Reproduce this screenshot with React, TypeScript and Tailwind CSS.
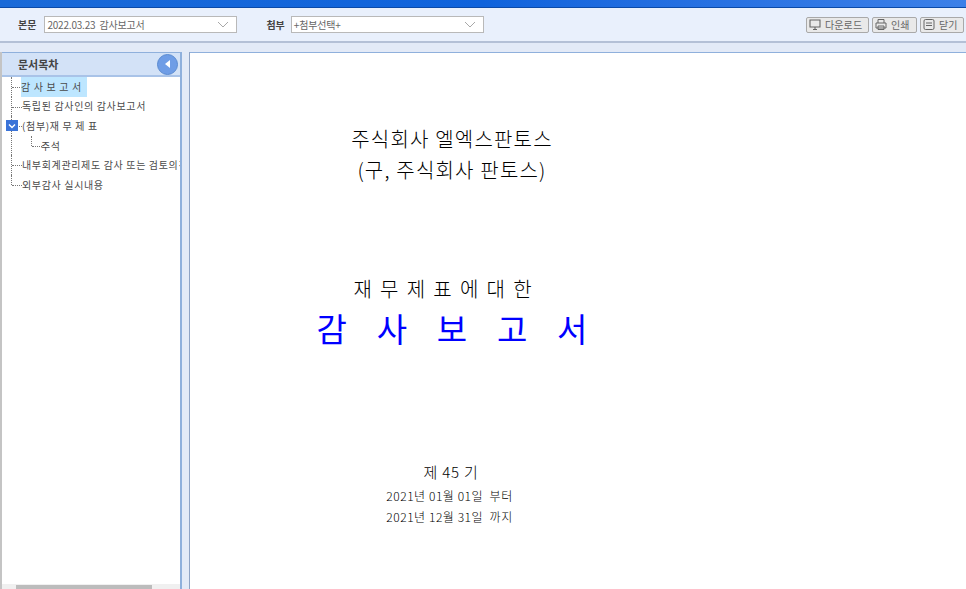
import React from "react";

const font = { fontFamily: '"Noto Sans CJK KR", "Noto Sans", sans-serif' };

function Chevron() {
  return (
    <svg width="12" height="7" viewBox="0 0 12 7" className="shrink-0">
      <path d="M1 1l5 5 5-5" fill="none" stroke="#a8a8a8" strokeWidth="1" />
    </svg>
  );
}

function Select({ text, className }: { text: string; className: string }) {
  return (
    <div className={`flex h-[17px] items-center justify-between border border-[#b9b9b9] bg-white pl-[2px] pr-[7px] text-[10px] leading-none tracking-[-0.2px] text-[#666] ${className}`}>
      <span className="whitespace-pre">{text}</span>
      <Chevron />
    </div>
  );
}

function Btn({ label, icon, className }: { label: string; icon: React.ReactNode; className: string }) {
  return (
    <div className={`flex h-4 items-center gap-[3px] rounded-[2px] border border-[#a9a9a9] bg-[#e9e9e9] pl-[1px] text-[10px] leading-none tracking-[0.1px] text-[#666] ${className}`}>
      {icon}
      <span>{label}</span>
    </div>
  );
}

function TreeRow({ label, h = false, expander = false, indent = false, last = false }: { label: string; h?: boolean; expander?: boolean; indent?: boolean; last?: boolean }) {
  return (
    <div className={`relative flex h-[19.6px] items-center overflow-hidden whitespace-nowrap text-[10px] leading-none tracking-[0.65px] text-[#4a4a4a] ${indent ? "pl-[38px]" : "pl-[19px]"}`}>
      {!indent && <span className={`absolute left-[9px] top-0 w-0 border-l border-dotted border-[#777] ${last ? "h-[10px]" : "h-full"}`} />}
      {indent && <span className="absolute left-[29px] top-0 h-[10px] w-0 border-l border-dotted border-[#777]" />}
      {indent && <span className="absolute left-[9px] top-0 h-full w-0 border-l border-dotted border-[#777]" />}
      <span className={`absolute top-[10px] w-[10px] border-t border-dotted border-[#777] ${indent ? "left-[30px]" : "left-[10px]"}`} />
      {expander && (
        <span className="absolute left-[4px] top-[4px] flex h-[11px] w-[12px] items-center justify-center bg-[#3a73d8]">
          <svg width="8" height="6" viewBox="0 0 8 6"><path d="M1 1.5l3 3 3-3" fill="none" stroke="#fff" strokeWidth="1.4" /></svg>
        </span>
      )}
      <span className={`relative flex h-5 items-center ${h ? "w-[66px] bg-[#bde6ff]" : "px-[1px]"}`}>{label}</span>
    </div>
  );
}

export default function App() {
  return (
    <div className="flex h-[589px] w-[966px] flex-col overflow-hidden bg-[#e3eaf7]" style={font}>
      <div className="h-2 shrink-0 border-b border-[#0b4aa8] bg-gradient-to-r from-[#1a6ad8] via-[#0f63dc] to-[#3c80e8]" />
      <div className="flex h-[35px] shrink-0 items-center border-b-2 border-[#b4c0d6] bg-[#e9f0fc] pl-[18px] pr-[2px]">
        <span className="mr-2 text-[10px] font-bold leading-none text-[#444]">본문</span>
        <Select text="2022.03.23  감사보고서" className="w-[193px]" />
        <span className="ml-[29px] mr-[6px] text-[10px] font-bold leading-none text-[#444]">첨부</span>
        <Select text="+첨부선택+" className="w-[193px]" />
        <div className="ml-auto flex gap-[3px]">
          <Btn
            label="다운로드"
            className="w-[63px]"
            icon={
              <svg width="14" height="13" viewBox="0 0 14 13"><path d="M2 2h10v7H2zM5 11.5h4M7 9v2.5" fill="none" stroke="#666" strokeWidth="1.1" /></svg>
            }
          />
          <Btn
            label="인쇄"
            className="w-[45px]"
            icon={
              <svg width="14" height="13" viewBox="0 0 14 13"><path d="M4 5V1.5h6V5M2 5h10v5H2zM4 8h6v3.5H4z" fill="none" stroke="#666" strokeWidth="1" /></svg>
            }
          />
          <Btn
            label="닫기"
            className="w-[44px]"
            icon={
              <svg width="14" height="13" viewBox="0 0 14 13"><rect x="2" y="1.5" width="10" height="10" rx="1.5" fill="none" stroke="#666" strokeWidth="1" /><path d="M4 5h6M4 7.5h6" stroke="#666" strokeWidth="1" /></svg>
            }
          />
        </div>
      </div>
      <div className="flex min-h-0 flex-1 pt-[9px]">
        <div className="w-[2px] shrink-0 bg-[#c4c4c4]" />
        <aside className="flex w-[180px] shrink-0 flex-col border-r-2 border-t border-[#8fb0dc] bg-white">
          <div className="flex h-[24px] shrink-0 items-center justify-between border-b-2 border-[#a9c3e8] bg-[#d3e2f7] pl-[16px] pr-[2px]">
            <span className="text-[11px] font-bold leading-none text-[#444]">문서목차</span>
            <span className="flex h-[21px] w-[21px] items-center justify-center rounded-full border border-[#5b8bd0] bg-[#6f9de6]">
              <svg width="6" height="8" viewBox="0 0 6 8"><path d="M5 0v8L0 4z" fill="#fff" /></svg>
            </span>
          </div>
          <div className="min-h-0 flex-1 overflow-hidden">
            <TreeRow label="감 사 보 고 서" h />
            <TreeRow label="독립된 감사인의 감사보고서" />
            <TreeRow label="(첨부)재 무 제 표" expander />
            <TreeRow label="주석" indent />
            <TreeRow label="내부회계관리제도 감사 또는 검토의견" />
            <TreeRow label="외부감사 실시내용" last />
          </div>
          <div className="flex h-[5px] shrink-0 items-start bg-[#f0f0f0]">
            <div className="ml-[14px] mt-[1px] h-[4px] w-[136px] bg-[#bcbcbc]" />
          </div>
        </aside>
        <div className="w-[8px] shrink-0 border-r border-[#8fa3c4] bg-[#e3eaf7]" />
        <main className="flex min-w-0 flex-1 flex-col border-t border-[#8fb0dc] bg-white text-black">
          <div className="w-[524px] text-center font-light">
            <p className="mt-[70px] text-[20px] leading-[31px] tracking-[1.2px]">주식회사 엘엑스판토스</p>
            <p className="text-[20px] leading-[31px] tracking-[1.2px]">(구, 주식회사 판토스)</p>
            <p className="mt-[88px] pr-[17px] text-[20px] leading-[32px] tracking-[1.9px]">재 무 제 표 에 대 한</p>
            <p className="mt-[1px] whitespace-pre pl-[5px] text-[33px] font-normal leading-[44px] tracking-[5px] text-[#0000ff]">감  사  보  고  서</p>
            <p className="mt-[111px] pr-[2px] text-[15px] leading-[22px] tracking-[0.8px]">제 45 기</p>
            <p className="mt-[2px] whitespace-pre pr-[5px] text-[12px] leading-[21px] tracking-[0.55px]">2021년 01월 01일  부터</p>
            <p className="whitespace-pre pr-[5px] text-[12px] leading-[21px] tracking-[0.55px]">2021년 12월 31일  까지</p>
          </div>
        </main>
      </div>
    </div>
  );
}
